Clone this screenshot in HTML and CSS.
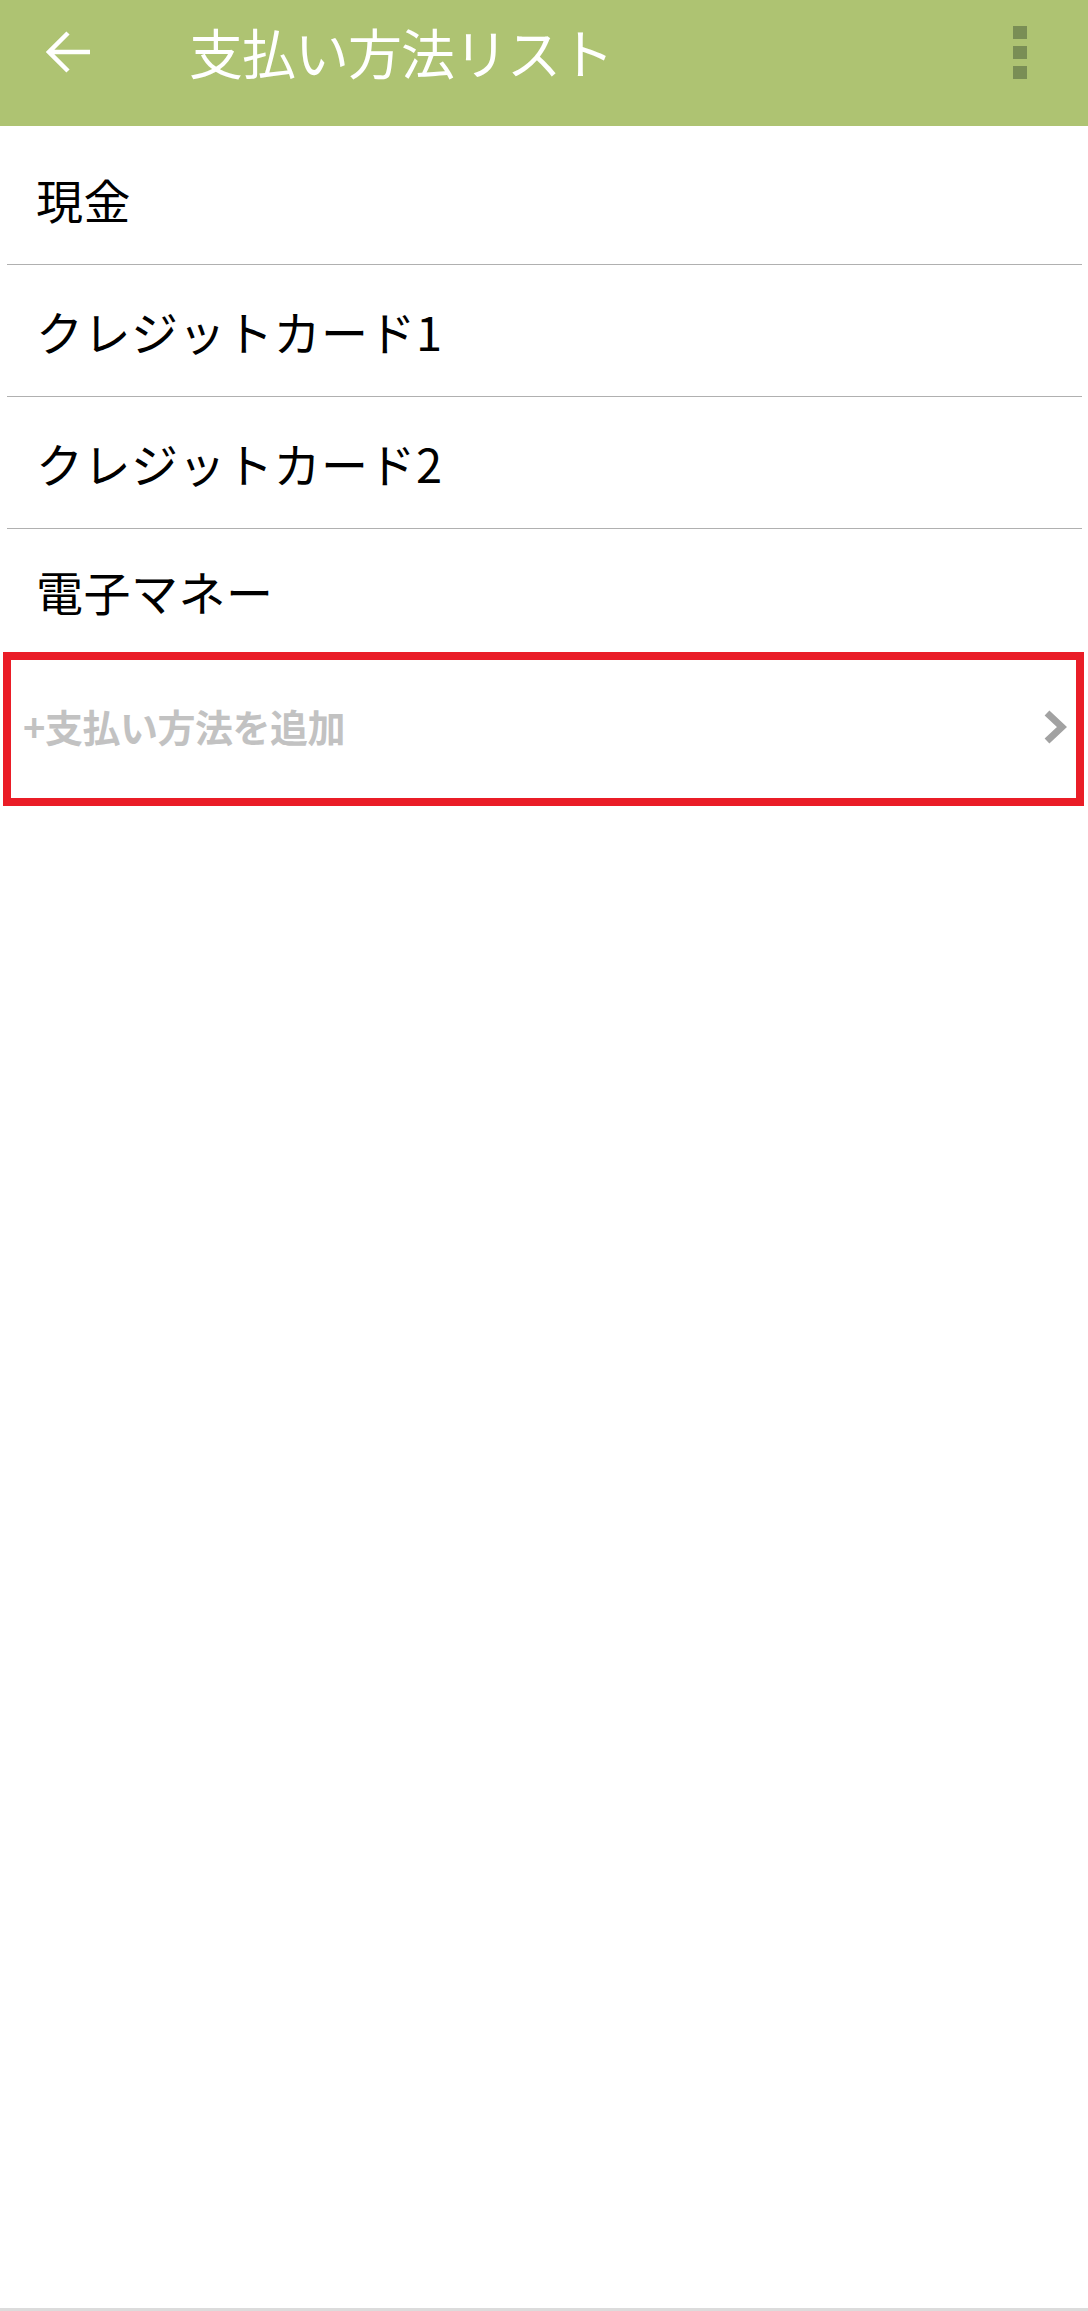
FILE: index.html
```html
<!DOCTYPE html>
<html lang="ja">
<head>
<meta charset="utf-8">
<title>支払い方法リスト</title>
<link rel="stylesheet" href="styles.css">
</head>
<body>
<div class="screen">
  <header class="appbar">
    <button class="back" aria-label="戻る">
      <svg width="46" height="44" viewBox="0 0 46 44"><path d="M44 22 H4 M22 3 L3 22 L22 41" fill="none" stroke="#fff" stroke-width="4.5" stroke-linecap="butt" stroke-linejoin="miter"/></svg>
    </button>
    <h1 class="title">支払い方法リスト</h1>
    <div class="menu" aria-label="メニュー"><span></span><span></span><span></span></div>
  </header>
  <main class="list">
    <div class="item">現金</div>
    <div class="item">クレジットカード1</div>
    <div class="item">クレジットカード2</div>
    <div class="item last">電子マネー</div>
    <div class="add">
      <span class="add-label">+支払い方法を追加</span>
      <svg class="chev" width="24" height="34" viewBox="0 0 24 34"><path d="M4 3 L19 17 L4 31" fill="none" stroke="#a2a2a2" stroke-width="7"/></svg>
    </div>
  </main>
  <div class="navedge"></div>
</div>
</body>
</html>
```
FILE: styles.css
```css
html, body {
  margin: 0;
  padding: 0;
  background: #fff;
}
.screen {
  width: 1088px;
  height: 2311px;
  display: flex;
  flex-direction: column;
  font-family: "Noto Sans CJK JP", "Noto Sans", sans-serif;
}
.appbar {
  height: 126px;
  flex: none;
  background: #aec372;
  display: flex;
  align-items: center;
  position: relative;
}
.back {
  border: 0;
  background: none;
  padding: 0;
  margin: 0 0 0 46px;
  width: 46px;
  height: 44px;
  display: flex;
  align-self: flex-start;
  margin-top: 30px;
}
.title {
  margin: 0 0 0 97px;
  align-self: flex-start;
  margin-top: 12px;
  font-size: 54px;
  font-weight: 400;
  color: #fff;
  line-height: 80px;
  letter-spacing: -1px;
}
.menu {
  margin-left: auto;
  margin-right: 61px;
  align-self: flex-start;
  margin-top: 26px;
  display: flex;
  flex-direction: column;
  gap: 7px;
}
.menu span {
  width: 14px;
  height: 13px;
  background: #7a8e55;
}
.list {
  flex: 1;
  padding-top: 7px;
}
.item {
  height: 131px;
  margin: 0 6px 0 7px;
  border-bottom: 1.5px solid #b0b0b0;
  display: flex;
  align-items: center;
  padding-left: 29px;
  font-size: 47px;
  color: #000;
  letter-spacing: 0.5px;
}
.item.last {
  border-bottom: 0;
  height: 123px;
}
.add {
  margin: 0 4px 0 3px;
  height: 138px;
  border: 8px solid #ea1d27;
  display: flex;
  align-items: center;
  padding: 0 9px 0 12px;
}
.add-label {
  font-size: 38px;
  font-weight: 700;
  color: #c2c2c2;
  letter-spacing: -0.5px;
  padding-bottom: 8px;
}
.chev {
  margin-left: auto;
  margin-bottom: 4px;
}
.navedge {
  height: 3px;
  flex: none;
  background: #dcdcdc;
}
```
